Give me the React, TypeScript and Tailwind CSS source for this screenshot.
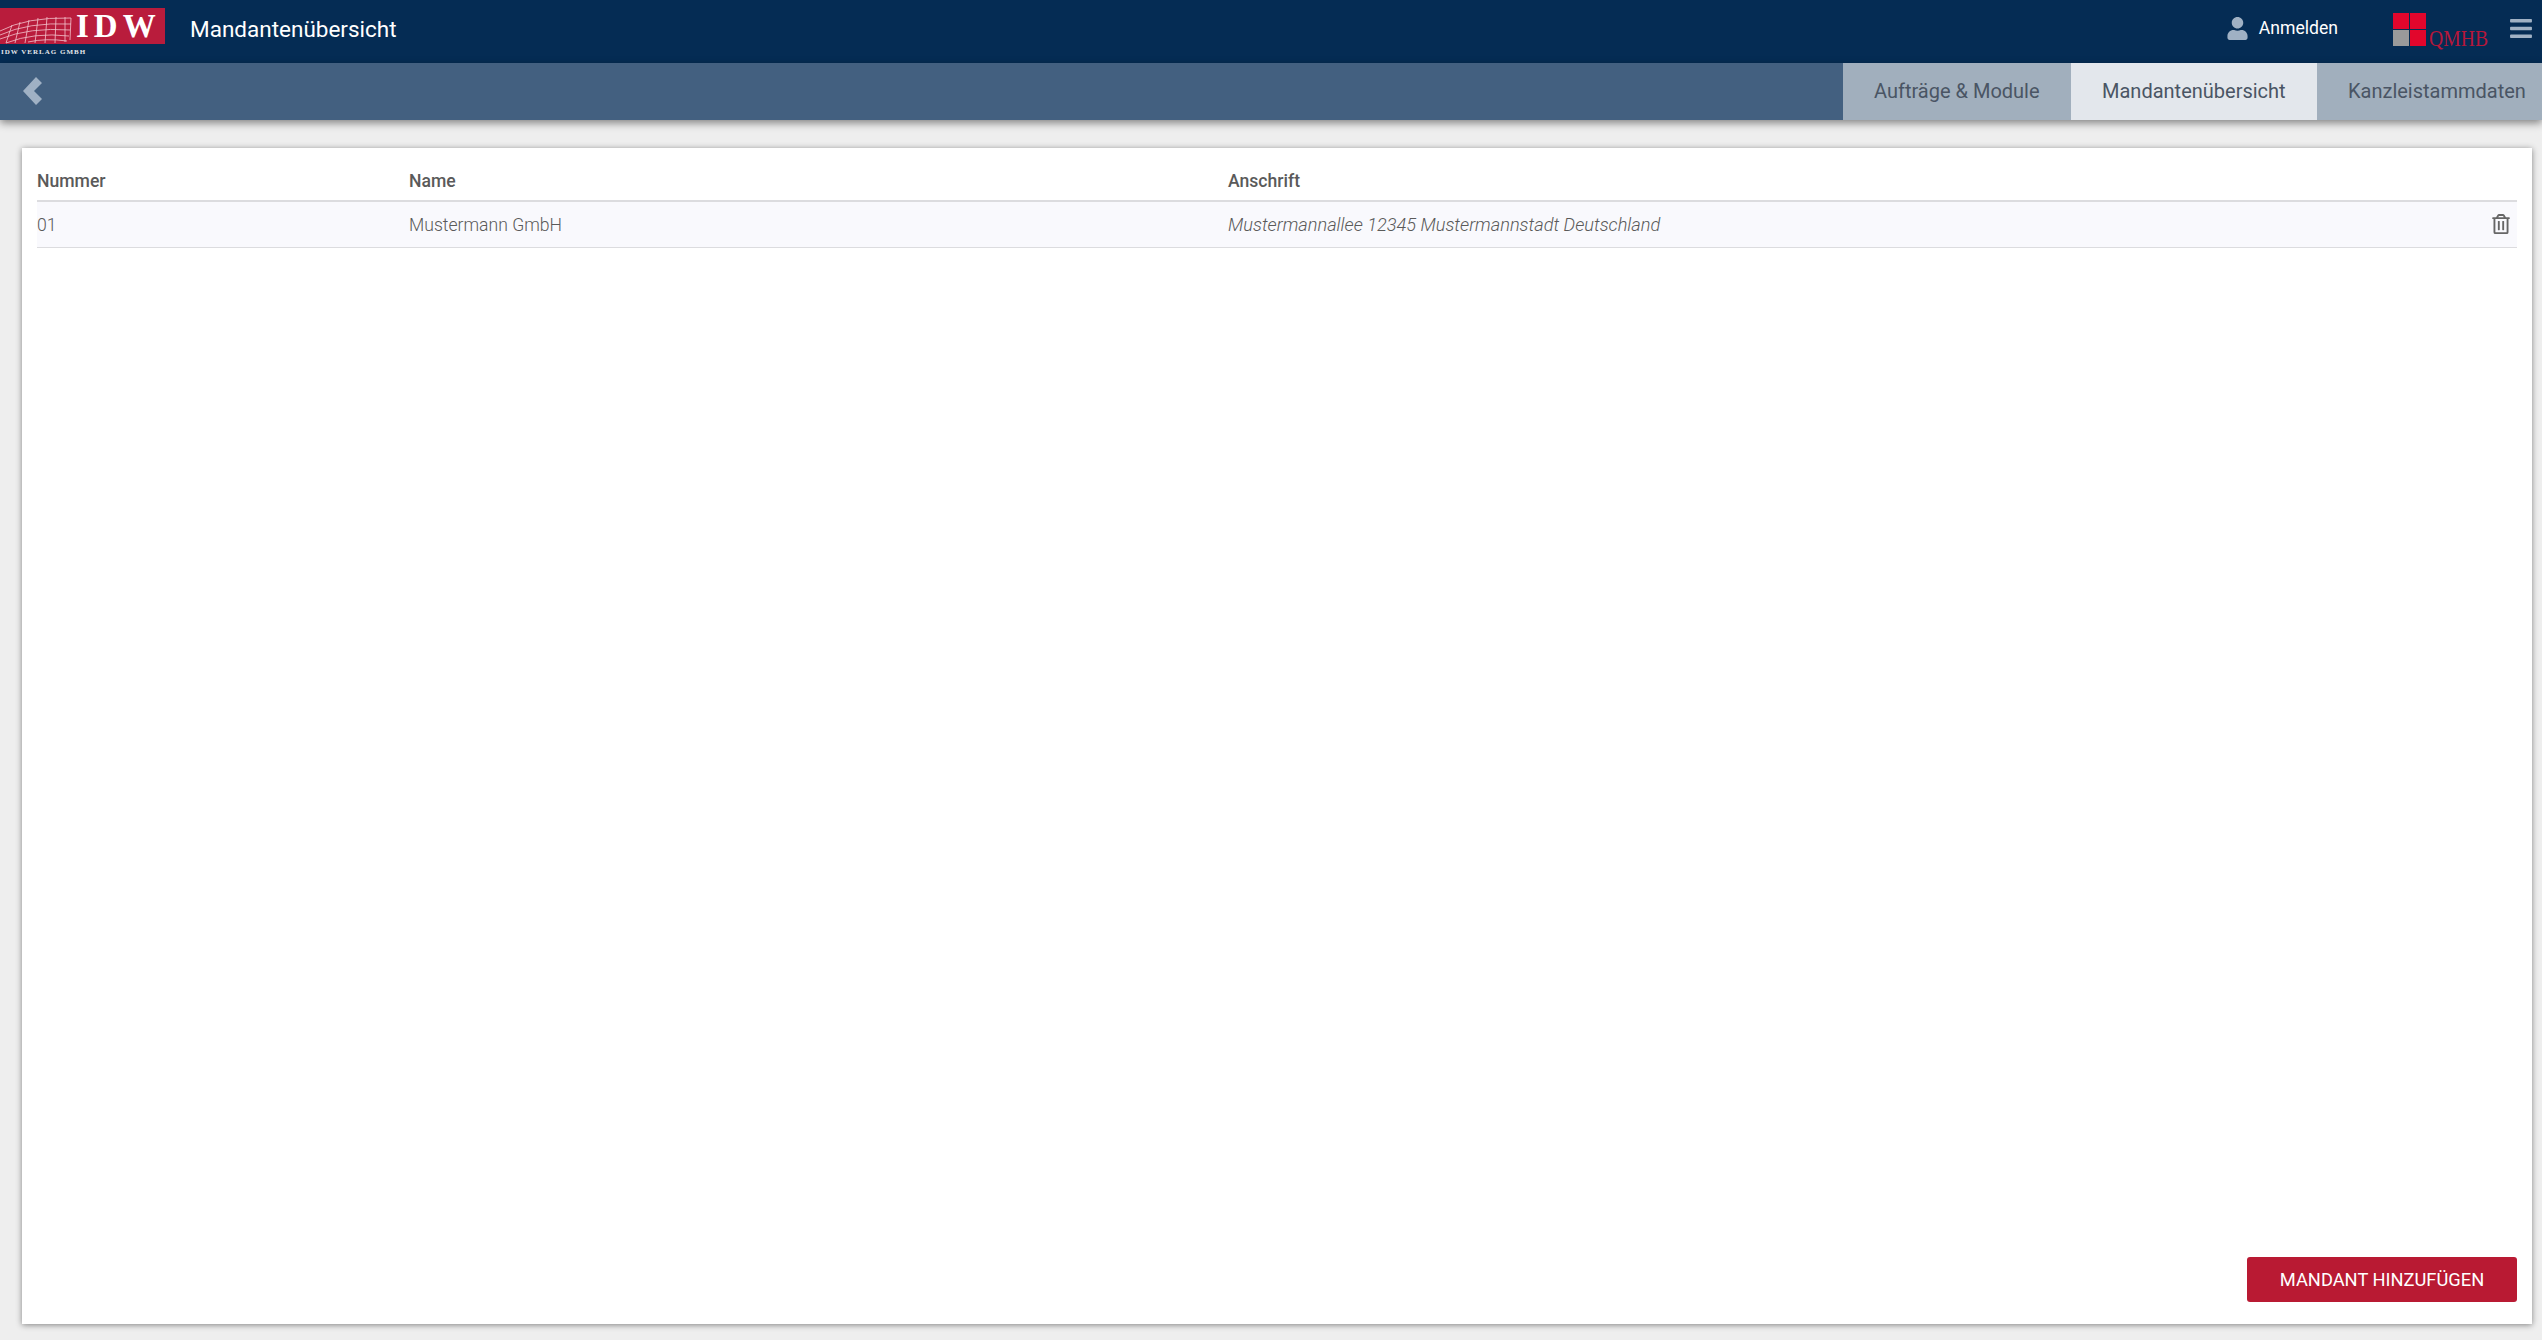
import React from 'react';
import { FaBars, FaRegTrashAlt, FaUser } from 'react-icons/fa';

interface Client {
  number: string;
  name: string;
  address: string;
}

const clients: Client[] = [
  { number: '01', name: 'Mustermann GmbH', address: 'Mustermannallee 12345 Mustermannstadt Deutschland' },
];

const tabs = [
  { label: 'Aufträge & Module', active: false, width: 'w-[228px]' },
  { label: 'Mandantenübersicht', active: true, width: 'w-[246px]' },
  { label: 'Kanzleistammdaten', active: false, width: 'w-[225px]' },
];

const IdwLogo: React.FC = () => (
  <svg width="165" height="57" viewBox="0 0 165 57" className="shrink-0">
    <rect x="0" y="8" width="165" height="36" fill="#b91c3c" />
    <g fill="none" stroke="#f3c3cd" strokeWidth="0.8">
      <path d="M0 31 Q26 17 71 18" />
      <path d="M0 35 Q28 22 71 24" />
      <path d="M0 39 Q30 27 70 30" />
      <path d="M6 43 Q34 32 69 36" />
      <path d="M28 42 Q46 38 67 41" />
      <path d="M12 25 L6 43" />
      <path d="M20 22 L15 43" />
      <path d="M29 20 L25 43" />
      <path d="M38 18 L35 43" />
      <path d="M47 17 L45 43" />
      <path d="M56 17 L55 43" />
      <path d="M65 17 L65 42" />
      <path d="M71 18 L70 40" />
    </g>
    <text x="76" y="37" fill="#ffffff" fontFamily="'Liberation Serif', serif" fontWeight="700" fontSize="33" letterSpacing="5">
      IDW
    </text>
    <text x="1" y="54" fill="#e5e7eb" fontFamily="'Liberation Serif', serif" fontWeight="700" fontSize="7" letterSpacing="1">
      IDW VERLAG GMBH
    </text>
  </svg>
);

const QmhbLogo: React.FC = () => (
  <svg width="108" height="42" viewBox="0 0 108 42" className="shrink-0">
    <rect x="0" y="0" width="16" height="16" fill="#e2062c" />
    <rect x="17" y="0" width="16" height="16" fill="#e2062c" />
    <rect x="0" y="17" width="16" height="16" fill="#9a9a9a" />
    <rect x="17" y="17" width="16" height="16" fill="#e2062c" />
    <text x="36" y="33" fill="#b5173a" fontFamily="'Liberation Serif', serif" fontSize="23" textLength="59" lengthAdjust="spacingAndGlyphs">
      QMHB
    </text>
  </svg>
);

const App: React.FC = () => {
  return (
    <div className="flex h-screen flex-col overflow-hidden bg-[#eeeeee] font-['Roboto',sans-serif]">
      {/* Top bar */}
      <header className="flex h-[63px] shrink-0 items-start bg-[#052c54]">
        <IdwLogo />
        <h1 className="ml-[25px] mt-[14px] text-[22.5px] leading-[30px] font-normal text-white">Mandantenübersicht</h1>
        <div className="ml-auto mt-[14px] flex h-[28px] items-center text-[#a0b1c4]">
          <FaUser className="h-[23px] w-[21px]" />
          <span className="ml-[11px] text-[17.6px] leading-[28px] text-white">Anmelden</span>
        </div>
        <div className="ml-[55px] mt-[13px]">
          <QmhbLogo />
        </div>
        <FaBars className="ml-[9px] mr-[10px] mt-[15.5px] h-[25px] w-[22px] text-[#a0b1c4]" />
      </header>

      {/* Sub navigation */}
      <nav className="z-10 flex h-[57px] shrink-0 items-stretch bg-[#436080] shadow-[0_3px_8px_rgba(0,0,0,0.45)]">
        <button className="ml-[23px] mb-[2px] text-[#a0b1c4]">
          <svg width="19" height="28" viewBox="0 0 19 28" fill="currentColor">
            <polygon points="13,0 19,6 11,14 19,22 13,28 0,14" />
          </svg>
        </button>
        <div className="ml-auto flex">
          {tabs.map(tab => (
            <div
              key={tab.label}
              className={`flex items-center overflow-hidden whitespace-nowrap pb-[1px] pl-[31px] text-[20px] text-[#4a5564] ${tab.width} ${
                tab.active ? 'bg-[#e3e7ec]' : 'bg-[#a1afbd]'
              }`}
            >
              {tab.label}
            </div>
          ))}
        </div>
      </nav>

      {/* Content */}
      <main className="flex min-h-0 flex-1 pb-[16px] pl-[22px] pr-[10px] pt-[28px]">
        <section className="flex flex-1 flex-col bg-white px-[15px] pb-[22px] shadow-[0_1px_6px_rgba(0,0,0,0.45)]">
          <table className="w-full table-fixed border-collapse text-[17.6px] text-[#5a5a5a]">
            <thead>
              <tr className="h-[53px] border-b-2 border-[#dcdcdf]">
                <th className="w-[372px] pt-[14px] text-left font-medium">Nummer</th>
                <th className="w-[819px] pt-[14px] text-left font-medium">Name</th>
                <th className="pt-[14px] text-left font-medium">Anschrift</th>
                <th className="w-[40px]" />
              </tr>
            </thead>
            <tbody>
              {clients.map(client => (
                <tr key={client.number} className="h-[46px] border-b border-[#dcdcdf] bg-[#f9f9fd] font-light">
                  <td className="pt-[2px]">{client.number}</td>
                  <td className="pt-[2px]">{client.name}</td>
                  <td className="text-[18.2px] italic">{client.address}</td>
                  <td>
                    <FaRegTrashAlt className="ml-auto mr-[7px] h-[20px] w-[18px] text-[#666666]" />
                  </td>
                </tr>
              ))}
            </tbody>
          </table>
          <button className="ml-auto mt-auto h-[45px] w-[270px] rounded-[3px] bg-[#b91a33] text-[18.3px] font-normal text-white">
            MANDANT HINZUFÜGEN
          </button>
        </section>
      </main>
    </div>
  );
};

export default App;
